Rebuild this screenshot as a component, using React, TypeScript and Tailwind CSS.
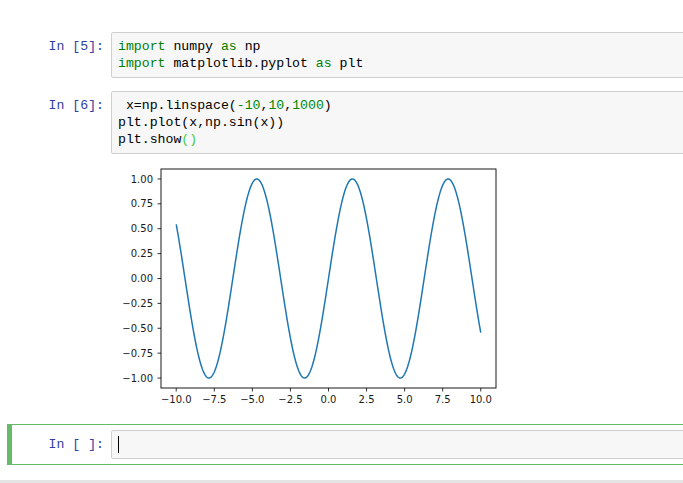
import React from 'react';

const MONO = "font-['Liberation_Mono',monospace]";

// plot geometry (svg coords)
const FX0 = 50;
const FX1 = 385;
const FY0 = 10;
const FY1 = 229;
const px = (x: number) => FX0 + ((x + 11) * (FX1 - FX0)) / 22;
const py = (y: number) => FY0 + ((1.1 - y) * (FY1 - FY0)) / 2.2;

function sinePath() {
  const pts: string[] = [];
  const n = 600;
  for (let i = 0; i <= n; i++) {
    const x = -10 + (20 * i) / n;
    pts.push(`${i === 0 ? 'M' : 'L'}${px(x).toFixed(2)},${py(Math.sin(x)).toFixed(2)}`);
  }
  return pts.join(' ');
}

const xTicks = [-10, -7.5, -5, -2.5, 0, 2.5, 5, 7.5, 10];
const yTicks = [1, 0.75, 0.5, 0.25, 0, -0.25, -0.5, -0.75, -1];

const fmt = (v: number, d: number) => (v < 0 ? '\u2212' : '') + Math.abs(v).toFixed(d);

function SinePlot() {
  return (
    <svg width="392" height="252" viewBox="0 0 392 252" className="block">
      <path d={sinePath()} fill="none" stroke="#1f77b4" strokeWidth="1.5" strokeLinejoin="round" />
      <rect x={FX0} y={FY0} width={FX1 - FX0} height={FY1 - FY0} fill="none" stroke="#000" strokeWidth="0.9" />
      {xTicks.map((t) => (
        <g key={t}>
          <line x1={px(t)} x2={px(t)} y1={FY1} y2={FY1 + 3.5} stroke="#000" strokeWidth="0.8" />
          <text
            x={px(t)}
            y={FY1 + 15}
            textAnchor="middle"
            fontSize="10"
            fontFamily="'DejaVu Sans', sans-serif"
            fill="#1a1a1a"
          >
            {fmt(t, 1)}
          </text>
        </g>
      ))}
      {yTicks.map((t) => (
        <g key={t}>
          <line x1={FX0 - 3.5} x2={FX0} y1={py(t)} y2={py(t)} stroke="#000" strokeWidth="0.8" />
          <text
            x={42}
            y={py(t) + 3.6}
            textAnchor="end"
            fontSize="10"
            fontFamily="'DejaVu Sans', sans-serif"
            fill="#1a1a1a"
          >
            {fmt(t, 2)}
          </text>
        </g>
      ))}
    </svg>
  );
}

const K = ({ children }: { children: React.ReactNode }) => (
  <span className="text-[#008000]">{children}</span>
);
const N = ({ children }: { children: React.ReactNode }) => (
  <span className="text-[#008800]">{children}</span>
);

function Prompt({ label }: { label: string }) {
  return (
    <div
      className={`${MONO} w-[98px] shrink-0 pr-[7px] pt-[6px] text-right text-[13.2px] leading-[17px] text-[#303F9F] whitespace-pre`}
    >
      {label}
    </div>
  );
}

function InputArea({ children }: { children: React.ReactNode }) {
  return (
    <div
      className={`${MONO} flex-1 bg-[#f7f7f7] border border-[#cfcfcf] rounded-[2px] py-[5px] pl-[6px] text-[13.2px] leading-[17px] text-black whitespace-pre`}
    >
      {children}
    </div>
  );
}

export default function App() {
  return (
    <div className="w-[683px] h-[483px] overflow-hidden bg-white flex flex-col">
      <div className="w-[760px] pt-[26px] pl-[7px] flex flex-col gap-px">
        {/* cell 5 */}
        <div className="flex border border-transparent p-[5px]">
          <Prompt label="In [5]:" />
          <InputArea>
            <div>
              <K>import</K> numpy <K>as</K> np
            </div>
            <div>
              <K>import</K> matplotlib.pyplot <K>as</K> plt
            </div>
          </InputArea>
        </div>

        {/* cell 6 */}
        <div className="flex flex-col border border-transparent p-[5px]">
          <div className="flex">
            <Prompt label="In [6]:" />
            <InputArea>
              <div>
                {' x=np.linspace('}
                <N>-10</N>,<N>10</N>,<N>1000</N>)
              </div>
              <div>plt.plot(x,np.sin(x))</div>
              <div>
                plt.show<span className="text-[#3ccf3c]">()</span>
              </div>
            </InputArea>
          </div>
          <div className="flex pt-[5px]">
            <div className="w-[98px] shrink-0" />
            <SinePlot />
          </div>
        </div>

        {/* cell empty, edit mode */}
        <div className="mt-[6px] flex border border-[#66bb6a] border-l-[5px] py-[5px] pr-[5px] pl-px">
          <Prompt label="In [ ]:" />
          <InputArea>
            <span className="inline-block w-px h-[17px] bg-black align-top" />
          </InputArea>
        </div>
      </div>
      <div className="mt-auto h-[3px] bg-[#e4e4e4]" />
    </div>
  );
}
